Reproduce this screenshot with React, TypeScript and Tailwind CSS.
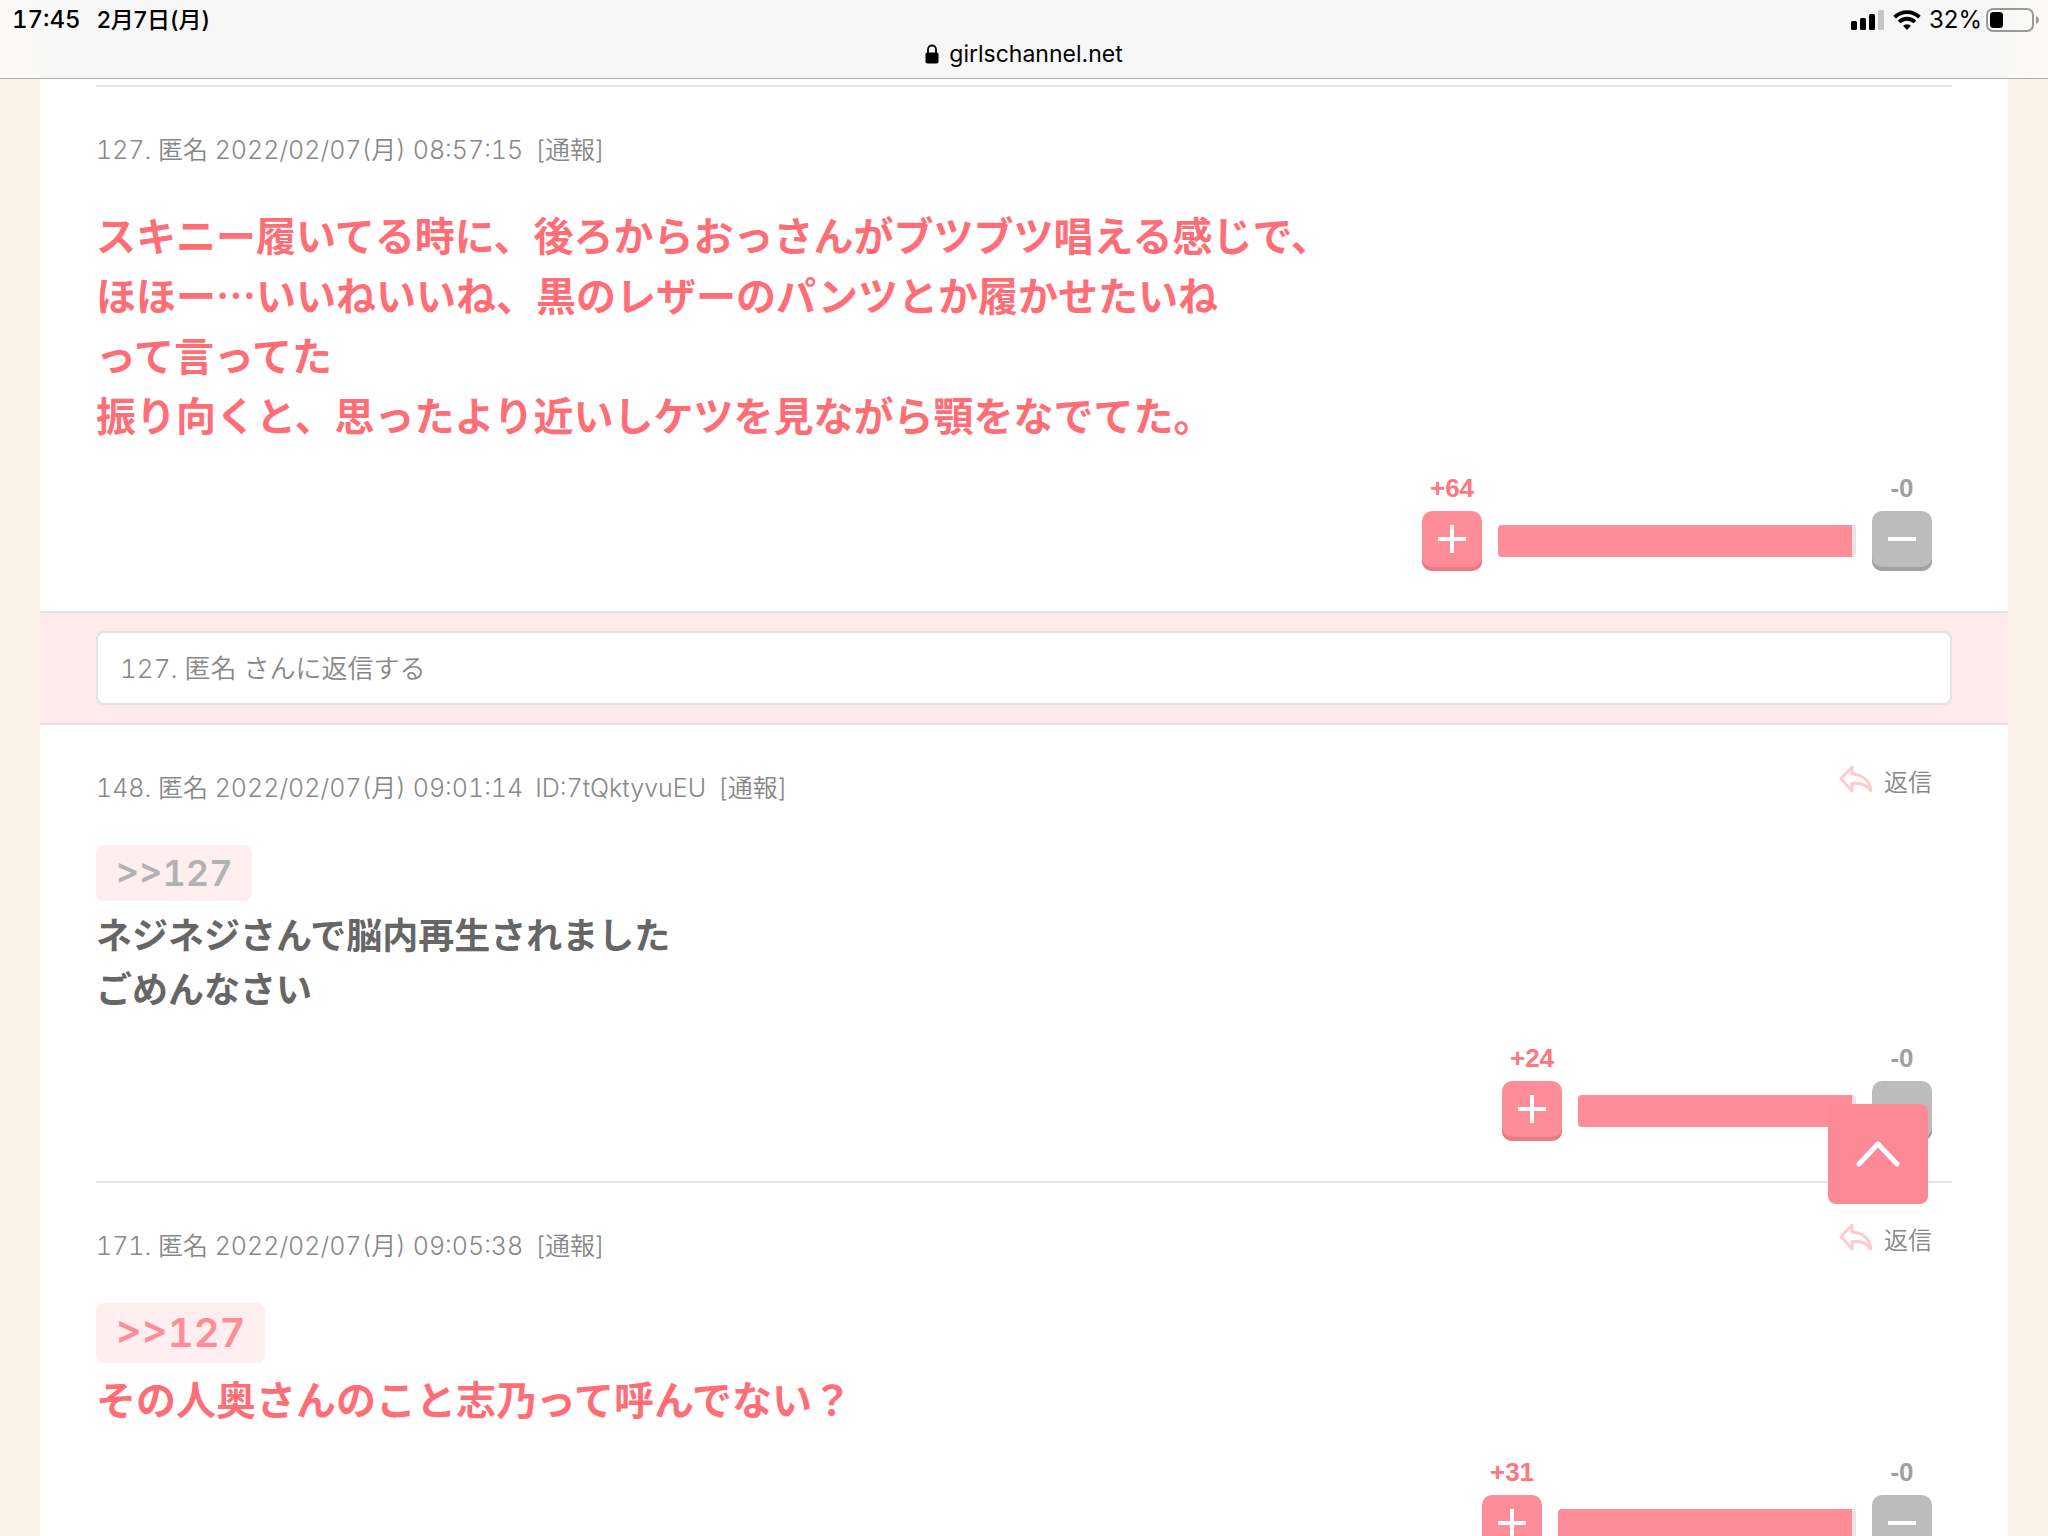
type Comment = {
  no: number;
  time: string;
  id?: string;
  quote?: string;
  lines: string[];
  plus: number;
  minus: number;
  popular?: boolean;
};

const parent: Comment = {
  no: 127,
  time: "2022/02/07(月) 08:57:15",
  lines: [
    "スキニー履いてる時に、後ろからおっさんがブツブツ唱える感じで、",
    "ほほー…いいねいいね、黒のレザーのパンツとか履かせたいね",
    "って言ってた",
    "振り向くと、思ったより近いしケツを見ながら顎をなでてた。",
  ],
  plus: 64,
  minus: 0,
  popular: true,
};

const replies: Comment[] = [
  {
    no: 148,
    time: "2022/02/07(月) 09:01:14",
    id: "7tQktyvuEU",
    quote: ">>127",
    lines: ["ネジネジさんで脳内再生されました", "ごめんなさい"],
    plus: 24,
    minus: 0,
  },
  {
    no: 171,
    time: "2022/02/07(月) 09:05:38",
    quote: ">>127",
    lines: ["その人奥さんのこと志乃って呼んでない？"],
    plus: 31,
    minus: 0,
    popular: true,
  },
];

function StatusBar() {
  return (
    <header className="shrink-0 border-b border-[#acacac] bg-[linear-gradient(90deg,#fbfaf8,#f7f7f7_80px,#f7f7f7_calc(100%-80px),#fbfaf8)] text-2xl leading-7 text-black">
      <div className="flex items-center justify-between pt-1.5 pr-2 pl-3">
        <div className="flex gap-4 font-medium">
          <span className="tabular-nums">17:45</span>
          <span className="text-[23px]">2月7日(月)</span>
        </div>
        <div className="flex items-center">
          <svg aria-hidden="true" width="34" height="20" viewBox="0 0 34 20">
            <rect x="0" y="11" width="6" height="9" rx="1.5" />
            <rect x="9" y="8" width="6" height="12" rx="1.5" />
            <rect x="18" y="4" width="6" height="16" rx="1.5" />
            <rect x="27" y="0" width="6" height="20" rx="1.5" fill="#c6c6c6" />
          </svg>
          <svg aria-hidden="true" className="ml-2" width="28" height="20" viewBox="0 0 28 20" fill="none" stroke="#000" strokeWidth="3.8">
            <path d="M1.6 7.2a17.6 17.6 0 0 1 24.8 0" />
            <path d="M6.1 12a11.2 11.2 0 0 1 15.8 0" />
            <path d="M14 20l-4-4.2a5.7 5.7 0 0 1 8 0z" fill="#000" stroke="none" />
          </svg>
          <span className="ml-2">32%</span>
          <svg aria-hidden="true" className="ml-1" width="54" height="24" viewBox="0 0 54 24">
            <rect x="1" y="1" width="46" height="22" rx="6" fill="none" stroke="#999" strokeWidth="2" />
            <rect x="4" y="4" width="13" height="16" rx="3.5" />
            <path d="M50 8c4 1.5 4 6.5 0 8z" fill="#999" />
          </svg>
        </div>
      </div>
      <div className="flex items-center justify-center gap-2.5 pt-1.5 pb-2.5">
        <svg aria-hidden="true" width="14" height="20" viewBox="0 0 14 20">
          <path d="M3 9V5.5a4 4 0 0 1 8 0V9" fill="none" stroke="#000" strokeWidth="1.8" />
          <rect x="0.5" y="8.5" width="13" height="11" rx="1.8" />
        </svg>
        <span className="text-[23px]">girlschannel.net</span>
      </div>
    </header>
  );
}

function ReplyLink() {
  return (
    <a href="#reply" className="mr-5 mb-3 flex items-center gap-3 text-2xl text-[#888]">
      <svg aria-hidden="true" className="mb-2" width="34" height="28" viewBox="0 0 34 28" fill="none" stroke="#ffcad0" strokeWidth="3" strokeLinejoin="round" strokeLinecap="round">
        <path d="M14 2L3 13.500L14 26V18.500C21 17.500 28 19 32.500 26C33 16.500 24.500 9.500 14 9Z" />
      </svg>
      返信
    </a>
  );
}

function Votes({ plus, minus }: { plus: number; minus: number }) {
  // the bar grows with the number of votes
  const width = plus > 50 ? 358 : plus > 30 ? 298 : 278;
  return (
    <div className="mt-7 mr-5 flex justify-end gap-4 font-['Liberation_Sans',Arial,sans-serif] text-[26px] leading-[26px] font-bold">
      <div className="flex w-15 flex-col items-center gap-2.5">
        <span className="text-[#ff767f]">+{plus}</span>
        <button aria-label="プラス" className="flex h-15 w-15 justify-center rounded-[10px] bg-[#ff8d99] pt-3.5 shadow-[inset_0_-4px_0_#ee7884]">
          <svg aria-hidden="true" width="28" height="28" viewBox="0 0 28 28" stroke="#fff" strokeWidth="4">
            <path d="M14 0v28M0 14h28" />
          </svg>
        </button>
      </div>
      <div className="mt-[50px] h-8 overflow-hidden rounded bg-[#e5e5e5] pr-1" style={{ width }}>
        <div className="h-full bg-[#ff8d99]" />
      </div>
      <div className="flex w-15 flex-col items-center gap-2.5">
        <span className="text-[#a0a0a0]">-{minus}</span>
        <button aria-label="マイナス" className="flex h-15 w-15 justify-center rounded-[10px] bg-[#bcbcbc] pt-3.5 shadow-[inset_0_-4px_0_#a0a0a0]">
          <svg aria-hidden="true" width="28" height="28" viewBox="0 0 28 28" stroke="#fff" strokeWidth="4">
            <path d="M0 14h28" />
          </svg>
        </button>
      </div>
    </div>
  );
}

function CommentItem({ comment, reply }: { comment: Comment; reply?: boolean }) {
  const { no, time, id, quote, lines, plus, minus, popular } = comment;
  return (
    <article className="px-14">
      <div className="flex h-12 items-center justify-between text-[25px] font-[350] text-[#888] tabular-nums">
        <p className="flex gap-3">
          <span>
            {no}. 匿名 {time}
          </span>
          {id && <span>ID:{id}</span>}
          <a href="#report">[通報]</a>
        </p>
        {reply && <ReplyLink />}
      </div>
      <div className={popular ? "mt-8 text-[40px] leading-15 font-bold text-[#ff6d76]" : "mt-8 text-4xl leading-[54px] font-bold text-[#666]"}>
        {quote && (
          <a
            href="#comment127"
            className={
              popular
                ? "mb-2 flex h-15 w-fit items-center rounded-lg bg-[#ffeef0] px-5 font-semibold text-[#ff8d99] tabular-nums"
                : "mb-2 flex h-14 w-fit items-center rounded-lg bg-[#ffeef0] px-5 font-semibold text-[#b2b2b2] tabular-nums"
            }
          >
            {quote}
          </a>
        )}
        {lines.map((line) => (
          <p key={line}>
            <span className="font-['Noto_Sans_CJK_JP',sans-serif] leading-none">{line}</span>
          </p>
        ))}
      </div>
      <Votes plus={plus} minus={minus} />
    </article>
  );
}

export default function App() {
  return (
    <div className="flex h-screen flex-col overflow-hidden bg-[#faf1e7] font-['Inter','Noto_Sans_CJK_JP',sans-serif]">
      <StatusBar />
      <main className="mx-10 flex-1 overflow-hidden bg-white">
        <div className="mx-14 mt-1.5 mb-10 border-b-2 border-[#e5e5e5]" />
        <CommentItem comment={parent} />
        <form className="mt-10 mb-10 border-y-2 border-[#e3e3e3] bg-[#ffebec] px-14 py-[18px]">
          <input
            type="text"
            aria-label="127. 匿名 さんに返信する"
            placeholder="127. 匿名 さんに返信する"
            className="block h-[74px] w-full rounded-lg border-2 border-[#e3e3e3] bg-white px-5.5 text-[26px] font-[350] tabular-nums placeholder:text-[#888]"
          />
        </form>
        <section>
          {replies.map((comment, i) => (
            <div key={comment.no}>
              {i > 0 && <div className="mx-14 my-10 border-b-2 border-[#e5e5e5]" />}
              <CommentItem comment={comment} reply />
            </div>
          ))}
        </section>
      </main>
      <button aria-label="ページの先頭へ" className="fixed right-30 bottom-[332px] flex h-25 w-25 items-center justify-center rounded-lg bg-[#fc8995]">
        <svg aria-hidden="true" width="44" height="26" viewBox="0 0 44 26" fill="none" stroke="#fff" strokeWidth="5" strokeLinecap="round" strokeLinejoin="round">
          <path d="M3 23L22 3L41 23" />
        </svg>
      </button>
    </div>
  );
}
